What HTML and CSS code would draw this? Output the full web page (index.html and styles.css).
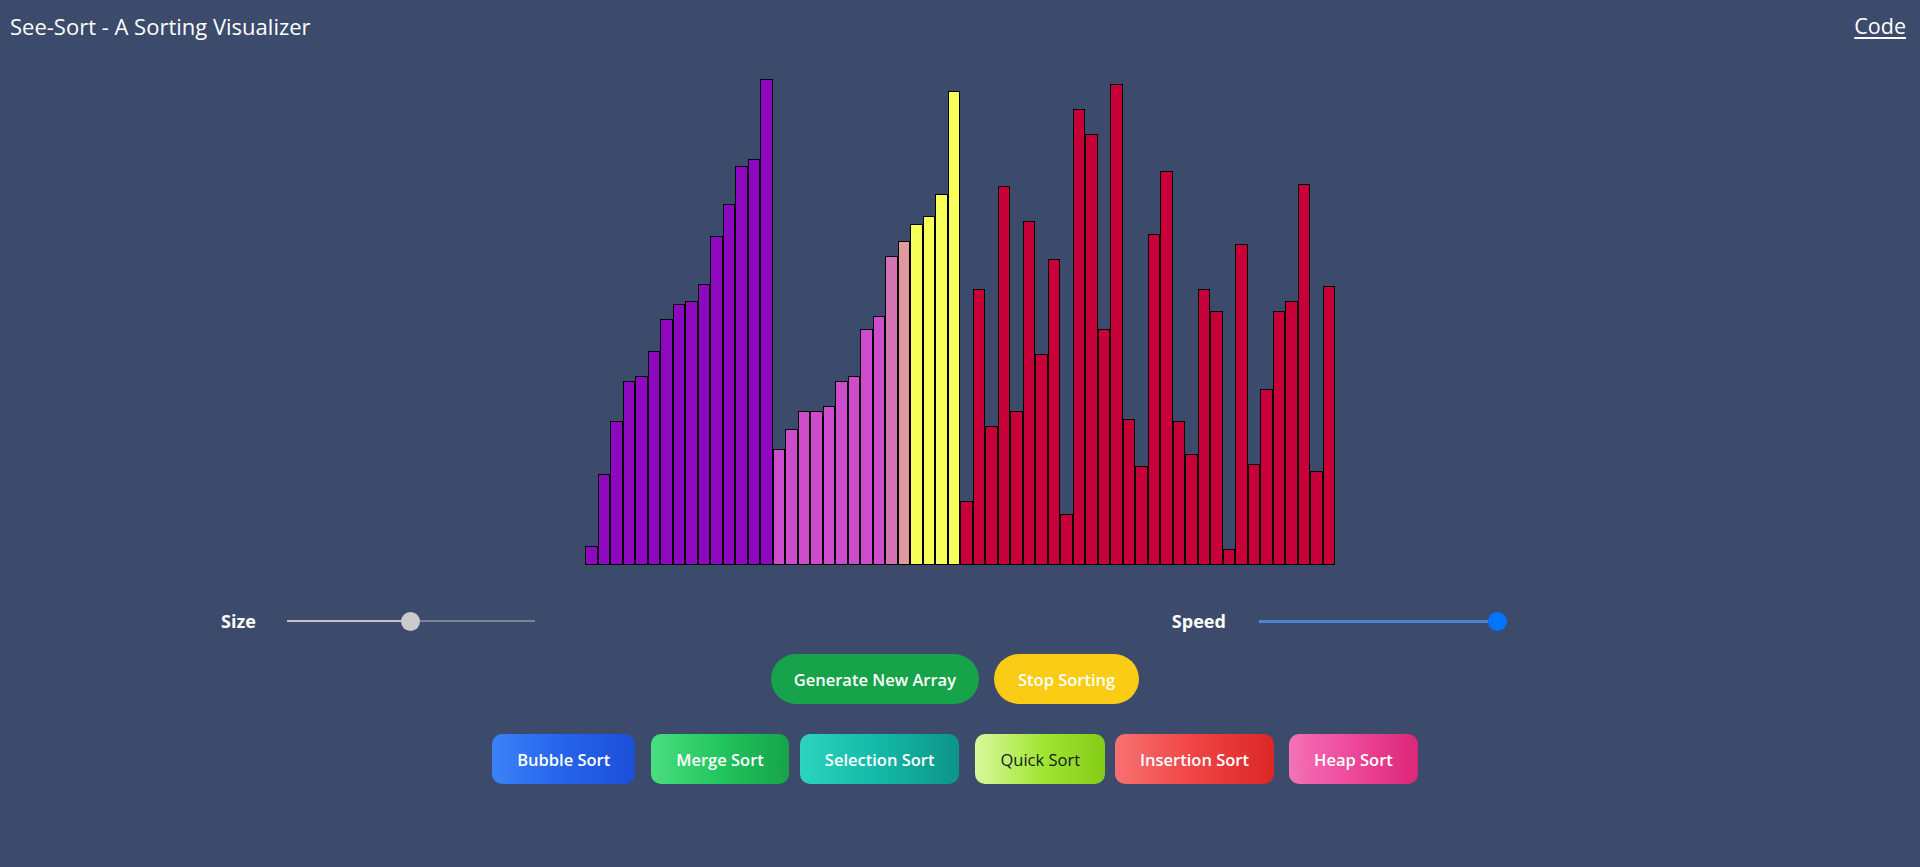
FILE: index.html
```html
<!DOCTYPE html>
<html lang="en">
<head>
<meta charset="utf-8">
<title>See-Sort - A Sorting Visualizer</title>
<link rel="stylesheet" href="styles.css">
</head>
<body>
<header class="header">
  <div class="title">See-Sort - A Sorting Visualizer</div>
  <a class="code-link" href="#">Code</a>
</header>
<main class="main">
  <div class="bars" id="bars"></div>
  <div class="controls">
    <div class="control">
      <span class="control-label">Size</span>
      <input class="range range-disabled" type="range" min="0" max="100" value="50" disabled>
    </div>
    <div class="control control-speed">
      <span class="control-label">Speed</span>
      <input class="range range-active" type="range" min="0" max="100" value="100">
    </div>
  </div>
  <div class="row row-main">
    <button class="pill pill-green">Generate New Array</button>
    <button class="pill pill-yellow">Stop Sorting</button>
  </div>
  <div class="row row-algos">
    <button class="algo algo-blue">Bubble Sort</button>
    <button class="algo algo-green">Merge Sort</button>
    <button class="algo algo-teal">Selection Sort</button>
    <button class="algo algo-lime">Quick Sort</button>
    <button class="algo algo-red">Insertion Sort</button>
    <button class="algo algo-pink">Heap Sort</button>
  </div>
</main>
<script src="app.js"></script>
</body>
</html>
```
FILE: styles.css
```css
* { box-sizing: border-box; }
html, body { margin: 0; padding: 0; }
body {
  background: #3c4a6b;
  font-family: "Open Sans", "Noto Sans", "Liberation Sans", sans-serif;
  color: #ffffff;
  height: 867px;
  overflow: hidden;
}
.header {
  height: 56px;
  display: flex;
  justify-content: space-between;
  align-items: flex-start;
  padding: 11px 14px 0 10px;
}
.title {
  font-size: 22px;
  line-height: 30px;
}
.code-link {
  color: #ffffff;
  font-size: 21.5px;
  line-height: 30px;
  text-decoration: underline;
  text-underline-offset: 3px;
}
.main {
  display: flex;
  flex-direction: column;
  align-items: center;
}
.bars {
  width: 750px;
  height: 509px;
  display: flex;
  align-items: flex-end;
}
.bar {
  width: 12.5px;
  flex: 0 0 12.5px;
  border: 1px solid #000000;
}
.bar-purple { background: #8d08bf; }
.bar-pink { background: #cc4ccc; }
.bar-mauve { background: #d472b3; }
.bar-salmon { background: #e0999c; }
.bar-yellow { background: #f8ff58; }
.bar-red { background: #c7003a; }

.controls {
  width: 100%;
  height: 30px;
  margin-top: 41px;
  display: flex;
  align-items: center;
  padding-left: 221px;
}
.control {
  display: flex;
  align-items: center;
}
.control-speed { margin-left: 637px; }
.control-label {
  font-weight: 700;
  font-size: 18px;
  line-height: 30px;
}
.range {
  -webkit-appearance: none;
  appearance: none;
  width: 248px;
  height: 19px;
  margin: 0 0 0 31px;
  background: transparent;
}
.control-speed .range { margin-left: 33px; }
.range::-webkit-slider-runnable-track {
  height: 2px;
}
.range-disabled::-webkit-slider-runnable-track {
  background: linear-gradient(to right, #c5c5c5 0%, #c5c5c5 50%, #7d8394 50%, #7d8394 100%);
}
.range-active::-webkit-slider-runnable-track {
  height: 3px;
  background: #4a86d4;
}
.range::-webkit-slider-thumb {
  -webkit-appearance: none;
  appearance: none;
  width: 19px;
  height: 19px;
  border-radius: 50%;
  margin-top: -8.5px;
  border: none;
}
.range-disabled::-webkit-slider-thumb { background: #cbcbcb; }
.range-active::-webkit-slider-thumb { background: #0075ff; margin-top: -8px; }

.row {
  display: flex;
  justify-content: center;
}
.row-main { margin-top: 18px; }
.row-algos { margin-top: 30px; }
button {
  font-family: inherit;
  border: none;
  cursor: pointer;
  color: #ffffff;
  font-size: 16.5px;
  font-weight: 600;
  line-height: 25px;
  padding: 12.5px 25px;
  margin: 0 10px 0 0;
}
.pill { border-radius: 25px; }
.pill-green { background: #16a34a; padding: 12.5px 23px; margin-right: 15px; }
.pill-yellow { background: #facc15; padding: 12.5px 24px; margin-right: 10px; }
.algo { border-radius: 10px; }
.algo-blue { background: linear-gradient(to right, #3b82f6, #2563eb, #1d4ed8); margin-right: 16px; }
.algo-green { background: linear-gradient(to right, #4ade80, #22c55e, #16a34a); margin-right: 11px; }
.algo-teal { background: linear-gradient(to right, #2dd4bf, #14b8a6, #0d9488); margin-right: 16px; }
.algo-lime { background: linear-gradient(to right, #d9f99d, #a3e635, #84cc16); color: #111827; font-weight: 400; margin-right: 10px; }
.algo-red { background: linear-gradient(to right, #f87171, #ef4444, #dc2626); margin-right: 15px; }
.algo-pink { background: linear-gradient(to right, #f472b6, #ec4899, #db2777); margin-right: 10px; }
```
FILE: app.js
```js
(function () {
  var heights = [19,91,144,184,189,214,246,261,264,281,329,361,399,406,486,
    116,136,154,154,159,184,189,236,249,309,324,341,349,371,474,
    64,276,139,379,154,344,211,306,51,456,431,236,481,146,99,331,394,144,111,276,254,16,321,101,176,254,264,381,94,279];
  var container = document.getElementById('bars');
  heights.forEach(function (h, i) {
    var cls = 'bar-red';
    if (i < 15) cls = 'bar-purple';
    else if (i < 24) cls = 'bar-pink';
    else if (i === 24) cls = 'bar-mauve';
    else if (i === 25) cls = 'bar-salmon';
    else if (i < 30) cls = 'bar-yellow';
    var d = document.createElement('div');
    d.className = 'bar ' + cls;
    d.style.height = h + 'px';
    container.appendChild(d);
  });
})();
```
